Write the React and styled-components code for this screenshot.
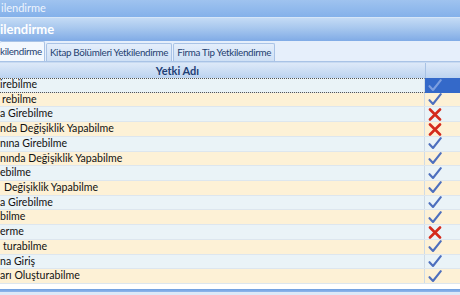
import React from "react";
import styled, { createGlobalStyle } from "styled-components";

const Global = createGlobalStyle`
  html, body {
    margin: 0;
    padding: 0;
    overflow: hidden;
    background: #dfeaf8;
  }
  body {
    font-family: Lato, "Open Sans", sans-serif;
  }
`;

const rows = [
  { name: "irebilme", ok: true, indent: 0 },
  { name: "rebilme", ok: true, indent: 2 },
  { name: "a Girebilme", ok: false, indent: 0 },
  { name: "nda Değişiklik Yapabilme", ok: false, indent: 0 },
  { name: "nına Girebilme", ok: true, indent: 0 },
  { name: "nında Değişiklik Yapabilme", ok: true, indent: 0 },
  { name: "ebilme", ok: true, indent: 0 },
  { name: "Değişiklik Yapabilme", ok: true, indent: 4 },
  { name: "a Girebilme", ok: true, indent: 0 },
  { name: "bilme", ok: true, indent: 0 },
  { name: "erme", ok: false, indent: 0 },
  { name: "turabilme", ok: true, indent: 3 },
  { name: "na Giriş", ok: true, indent: 0 },
  { name: "arı Oluşturabilme", ok: true, indent: 0 },
];

export default function App() {
  return (
    <>
      <Global />
      <Window>
        <TitleBar>ilendirme</TitleBar>
        <Header>ilendirme</Header>
        <TabStrip>
          <Tab active>kilendirme</Tab>
          <Tab>Kitap Bölümleri Yetkilendirme</Tab>
          <Tab>Firma Tip Yetkilendirme</Tab>
        </TabStrip>
        <Grid>
          <HeadRow>
            <HeadName>Yetki Adı</HeadName>
            <HeadFlag />
          </HeadRow>
          {rows.map((r, i) => (
            <Row key={i} alt={i % 2 === 1}>
              <NameCell selected={i === 0} indent={r.indent}>
                {r.name}
              </NameCell>
              <FlagCell selected={i === 0}>
                {r.ok ? <Check selected={i === 0} /> : <Cross />}
              </FlagCell>
            </Row>
          ))}
          <GridFoot />
        </Grid>
        <BottomLine />
      </Window>
    </>
  );
}

function Check({ selected }) {
  return (
    <svg width="14" height="13" viewBox="0 0 14 13">
      <path
        d="M1.5 7.2 L5 11 L12.8 1.2"
        fill="none"
        stroke={selected ? "#7d9fe0" : "#4d6fbe"}
        strokeWidth="2.1"
        strokeLinecap="round"
        strokeLinejoin="round"
      />
    </svg>
  );
}

function Cross() {
  return (
    <svg width="14" height="13" viewBox="0 0 14 13">
      <path
        d="M2 1.5 L12 11.5 M12 1.5 L2 11.5"
        fill="none"
        stroke="#d42a1c"
        strokeWidth="2.6"
        strokeLinecap="round"
      />
    </svg>
  );
}

const Window = styled.div`
  width: 460px;
  height: 295px;
  display: flex;
  flex-direction: column;
  overflow: hidden;
`;

const TitleBar = styled.div`
  height: 17px;
  line-height: 16px;
  padding-left: 1px;
  font-size: 11px;
  color: #eef4fd;
  background: linear-gradient(#9fc3ef, #84b1ea);
  white-space: nowrap;
`;

const Header = styled.div`
  height: 24px;
  line-height: 23px;
  font-size: 13px;
  font-weight: bold;
  color: #ffffff;
  background: linear-gradient(#c4dbf5 0%, #a7c7ee 45%, #80abe6 100%);
  border-top: 1px solid #d6e6f8;
  box-sizing: border-box;
  white-space: nowrap;
`;

const TabStrip = styled.div`
  height: 21px;
  display: flex;
  align-items: flex-end;
  background: #e6effb;
  border-bottom: 1px solid #a9c3e6;
  box-sizing: border-box;
`;

const Tab = styled.div`
  height: ${(p) => (p.active ? "20px" : "18px")};
  line-height: ${(p) => (p.active ? "19px" : "17px")};
  padding: 0 3px;
  margin-right: 1px;
  font-size: 9.8px;
  letter-spacing: -0.3px;
  color: #1e3f70;
  white-space: nowrap;
  box-sizing: border-box;
  border: 1px solid #a9c3e6;
  border-bottom: none;
  border-radius: 2px 2px 0 0;
  background: ${(p) =>
    p.active ? "#f3f8fe" : "linear-gradient(#e4eefb, #cfe0f5)"};
  &:first-child {
    border-left: none;
    padding-left: 0;
    padding-right: 2px;
  }
`;

const Grid = styled.div`
  flex: 1;
  display: flex;
  flex-direction: column;
  background: #ffffff;
`;

const HeadRow = styled.div`
  height: 16px;
  display: flex;
  background: linear-gradient(#dde9f8, #bcd3f0);
  border-top: 1px solid #c8daf1;
  box-sizing: border-box;
`;

const HeadName = styled.div`
  width: 495px;
  margin-left: -70px;
  text-align: center;
  font-size: 11px;
  font-weight: bold;
  color: #1f3f75;
  line-height: 15px;
  border-right: 1px solid #a8c2e4;
`;

const HeadFlag = styled.div`
  flex: 1;
`;

const Row = styled.div`
  height: 14.72px;
  display: flex;
  background: ${(p) => (p.alt ? "#fdf1d6" : "#eaf3f7")};
  border-bottom: 1px solid #dde6ee;
  box-sizing: border-box;
`;

const NameCell = styled.div`
  width: 425px;
  padding-left: ${(p) => p.indent}px;
  box-sizing: border-box;
  font-size: 10.6px;
  color: #111;
  line-height: ${(p) => (p.selected ? "11px" : "13px")};
  white-space: nowrap;
  overflow: hidden;
  border-right: 1px solid #cfdbe6;
  ${(p) =>
    p.selected &&
    `
    border-top: 1px dotted #555;
    border-bottom: 1px dotted #555;
    margin-bottom: -1px;
  `}
`;

const FlagCell = styled.div`
  flex: 1;
  display: flex;
  align-items: center;
  padding-left: 3px;
  background: ${(p) => (p.selected ? "#3469c9" : "transparent")};
  margin-bottom: ${(p) => (p.selected ? "-1px" : "0")};
`;

const GridFoot = styled.div`
  flex: 1;
  background: #ffffff;
`;

const BottomLine = styled.div`
  height: 3px;
  background: linear-gradient(#6f9fe0, #8fb6ea);
  border-bottom: 3px solid #dce8f7;
`;
